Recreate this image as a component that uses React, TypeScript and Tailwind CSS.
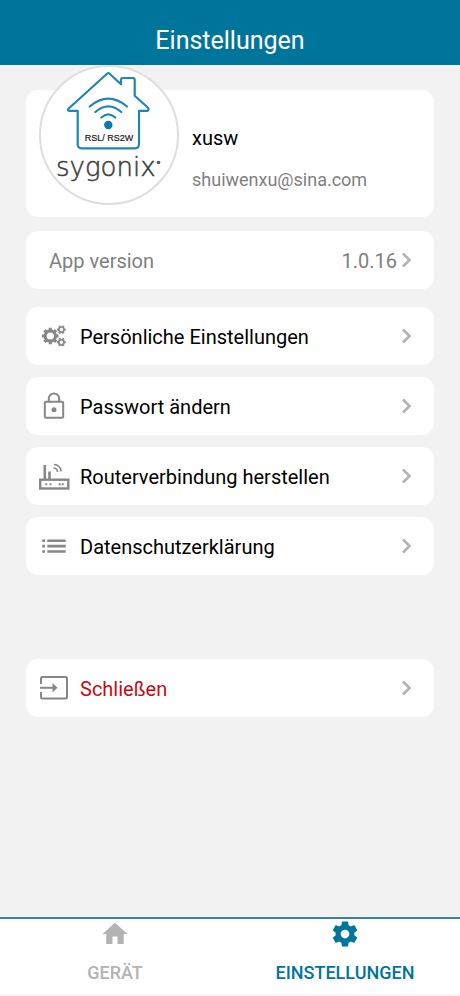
import React from 'react';
import { MdHome } from 'react-icons/md';

function ChevronIcon() {
  return (
    <svg viewBox="0 0 12 16" className="w-3 h-4 shrink-0" fill="none" stroke="#b3b3b3" strokeWidth="2.6" aria-hidden="true">
      <path d="M2 1.5 8.5 8 2 14.5" />
    </svg>
  );
}

function Gear({ cx, cy, r, ring, teeth }: { cx: number; cy: number; r: number; ring: number; teeth: number }) {
  return (
    <>
      <circle cx={cx} cy={cy} r={r} strokeWidth={ring} />
      <circle cx={cx} cy={cy} r={r + ring / 2 + 0.4} strokeWidth={ring * 0.7} pathLength={teeth * 2} strokeDasharray="1.1 0.9" strokeDashoffset="0.55" />
    </>
  );
}

function GearsIcon() {
  return (
    <svg viewBox="0 0 32 32" className="w-8 h-8" fill="none" stroke="#878787" aria-hidden="true">
      <Gear cx={12.3} cy={16} r={5.2} ring={3.2} teeth={8} />
      <Gear cx={23.4} cy={9.6} r={2.6} ring={1.7} teeth={6} />
      <Gear cx={23.4} cy={22.2} r={2.6} ring={1.7} teeth={6} />
    </svg>
  );
}

function LockIcon() {
  return (
    <svg viewBox="0 0 32 32" className="w-8 h-8" fill="none" stroke="#878787" strokeWidth="2" aria-hidden="true">
      <rect x="6.8" y="11.8" width="18.4" height="16" rx="1.2" />
      <path d="M10.8 11.5V8.6a5.2 5.2 0 0 1 10.4 0v2.9" />
      <circle cx="16" cy="19.8" r="2.5" fill="#878787" stroke="none" />
    </svg>
  );
}

function RouterIcon() {
  return (
    <svg viewBox="0 0 32 32" className="w-8 h-8" fill="none" stroke="#878787" strokeWidth="2.4" aria-hidden="true">
      <rect x="2.2" y="19.7" width="28.1" height="8.8" />
      <path d="M6.8 5v14.5M11.5 11.5v8" strokeWidth="2.6" />
      <path d="M16 4.500a7 7 0 0 1 7 7M15.500 8a4 4 0 0 1 4 4" strokeWidth="1.6" />
      <path d="M7.200 24.200h2M11.500 24.200h2M20.800 24.200h2M23.800 24.200h2" strokeWidth="2" />
    </svg>
  );
}

function ListIcon() {
  return (
    <svg viewBox="0 0 32 32" className="w-8 h-8" fill="none" stroke="#878787" strokeWidth="2.6" aria-hidden="true">
      <path d="M4.2 10.7h2.8M4.2 16.1h2.8M4.2 21.5h2.8M9.3 10.7h18.4M9.3 16.1h18.4M9.3 21.5h18.4" />
    </svg>
  );
}

function ExitIcon() {
  return (
    <svg viewBox="0 0 32 32" className="w-8 h-8" fill="none" stroke="#878787" strokeWidth="2" aria-hidden="true">
      <path d="M3 12V6.500Q3 5 4.500 5h23Q29 5 29 6.500V25q0 1.500-1.500 1.500h-23Q3 26.500 3 25v-5" />
      <path d="M2 15.800h13" />
      <path d="M14.500 11l5 4.800-5 4.800z" fill="#878787" stroke="none" />
    </svg>
  );
}

function SettingsIcon() {
  return (
    <svg viewBox="0 0 24 24" className="w-[30px] h-[30px]" fill="currentColor" aria-hidden="true">
      <path d="M19.430 12.980c.040-.320.070-.640.070-.980s-.030-.660-.070-.980l2.110-1.650c.190-.150.240-.420.120-.640l-2-3.460c-.120-.220-.390-.300-.610-.220l-2.490 1c-.520-.400-1.080-.730-1.690-.980l-.380-2.650C14.460 2.180 14.250 2 14 2h-4c-.250 0-.460.180-.490.420l-.380 2.650c-.610.250-1.170.590-1.690.980l-2.490-1c-.230-.090-.490 0-.610.220l-2 3.460c-.130.220-.070.490.120.640l2.110 1.650c-.040.320-.070.650-.070.980s.030.660.070.980l-2.110 1.650c-.190.150-.240.420-.120.640l2 3.460c.120.220.390.300.610.220l2.490-1c.520.400 1.080.730 1.690.980l.380 2.650c.030.240.240.420.490.420h4c.250 0 .460-.180.490-.420l.380-2.650c.610-.250 1.170-.590 1.690-.980l2.490 1c.230.090.490 0 .610-.220l2-3.460c.120-.220.070-.490-.120-.640l-2.110-1.650zM12 15.500c-1.930 0-3.500-1.570-3.500-3.500s1.570-3.500 3.500-3.500 3.500 1.570 3.500 3.500-1.570 3.500-3.500 3.500z" />
    </svg>
  );
}

function Logo() {
  return (
    <svg viewBox="2 2 136 136" className="w-full h-full" role="img" aria-label="sygonix RSL/ RS2W">
      <g fill="none" stroke="#1f86b0" strokeWidth="2.200" strokeLinecap="round" strokeLinejoin="round">
        <path d="M68 8.700Q69.300 7.500 70.600 8.700L82 19.300V15q0-2 2-2h9.700q2 0 2 2v15.700l13.300 12q1.500 2.800-.7 3.100H100v33.500q0 4-4 4H42.700q-4 0-4-4V45.800h-8.200q-2.500-.3-.8-2.300z" />
        <path d="M50.700 41.500q18.600-15.600 37.300 0M56.300 47q13-11.400 26 0M62.300 52.500q7-6.400 14 0" />
      </g>
      <circle cx="69.300" cy="60" r="4.200" fill="#0f7aa8" />
      <text x="70" y="76" textAnchor="middle" fontSize="9" fill="#222" stroke="#222" strokeWidth="0.2" className="font-['Liberation_Sans',sans-serif]">RSL/ RS2W</text>
      <text x="17" y="111" fontSize="26" fill="#3c3c3c" stroke="#3c3c3c" strokeWidth="0.500" className="font-['DejaVu_Sans',sans-serif] font-extralight">sygonix</text>
      <circle cx="119.500" cy="97.500" r="1.800" fill="#555" />
    </svg>
  );
}

const menuItems = [
  { label: 'Persönliche Einstellungen', icon: <GearsIcon /> },
  { label: 'Passwort ändern', icon: <LockIcon /> },
  { label: 'Routerverbindung herstellen', icon: <RouterIcon /> },
  { label: 'Datenschutzerklärung', icon: <ListIcon /> },
];

function MenuRow({ icon, label, danger = false }: { icon: React.ReactNode; label: string; danger?: boolean }) {
  return (
    <button type="button" className="flex items-center w-full h-[58px] pl-3 pr-[21px] bg-white rounded-xl text-left">
      <span className="w-8 shrink-0">{icon}</span>
      <span className={`flex-1 pl-[10px] pt-0.5 text-xl leading-7 ${danger ? 'text-[#c80a14]' : 'text-black'}`}>{label}</span>
      <ChevronIcon />
    </button>
  );
}

export default function App() {
  return (
    <div className="min-h-screen flex flex-col bg-[#f2f2f2] font-[Roboto,sans-serif]">
      <header className="h-[65px] pt-4 flex items-center justify-center bg-[#00759c]">
        <h1 className="text-[25px] leading-8 text-white">Einstellungen</h1>
      </header>

      <main className="flex-1 px-[26px] pt-[25px]">
        <section className="flex h-[127px] pl-[13px] bg-white rounded-xl">
          <div className="w-[140px] h-[140px] -mt-[25px] shrink-0 rounded-full bg-white border-2 border-[#dedede]">
            <Logo />
          </div>
          <div className="pl-[13px] pt-8">
            <p className="pt-0.5 text-xl leading-7 text-black">xusw</p>
            <p className="mt-[14px] text-lg leading-7 text-[#808080]">shuiwenxu@sina.com</p>
          </div>
        </section>

        <button type="button" className="flex items-center w-full h-[58px] mt-[14px] pl-[23px] pr-[21px] bg-white rounded-xl text-xl text-[#808080]">
          <span className="flex-1 pt-0.5 text-left">App version</span>
          <span className="pt-0.5 mr-1">1.0.16</span>
          <ChevronIcon />
        </button>

        <div className="flex flex-col gap-3 mt-[18px]">
          {menuItems.map((item) => (
            <MenuRow key={item.label} icon={item.icon} label={item.label} />
          ))}
        </div>

        <div className="mt-[84px]">
          <MenuRow icon={<ExitIcon />} label="Schließen" danger />
        </div>
      </main>

      <nav className="grid grid-cols-2 h-[79px] bg-white border-t-2 border-t-[#3c8398] border-b-2 border-b-[#f6f6f6] text-lg font-medium">
        <a href="#geraet" className="flex flex-col items-center text-[#b3b3b3]">
          <MdHome className="w-[30px] h-[30px]" />
          <span className="mt-[10px] leading-7">GERÄT</span>
        </a>
        <a href="#einstellungen" className="flex flex-col items-center text-[#00759c]">
          <SettingsIcon />
          <span className="mt-[10px] leading-7">EINSTELLUNGEN</span>
        </a>
      </nav>
    </div>
  );
}
